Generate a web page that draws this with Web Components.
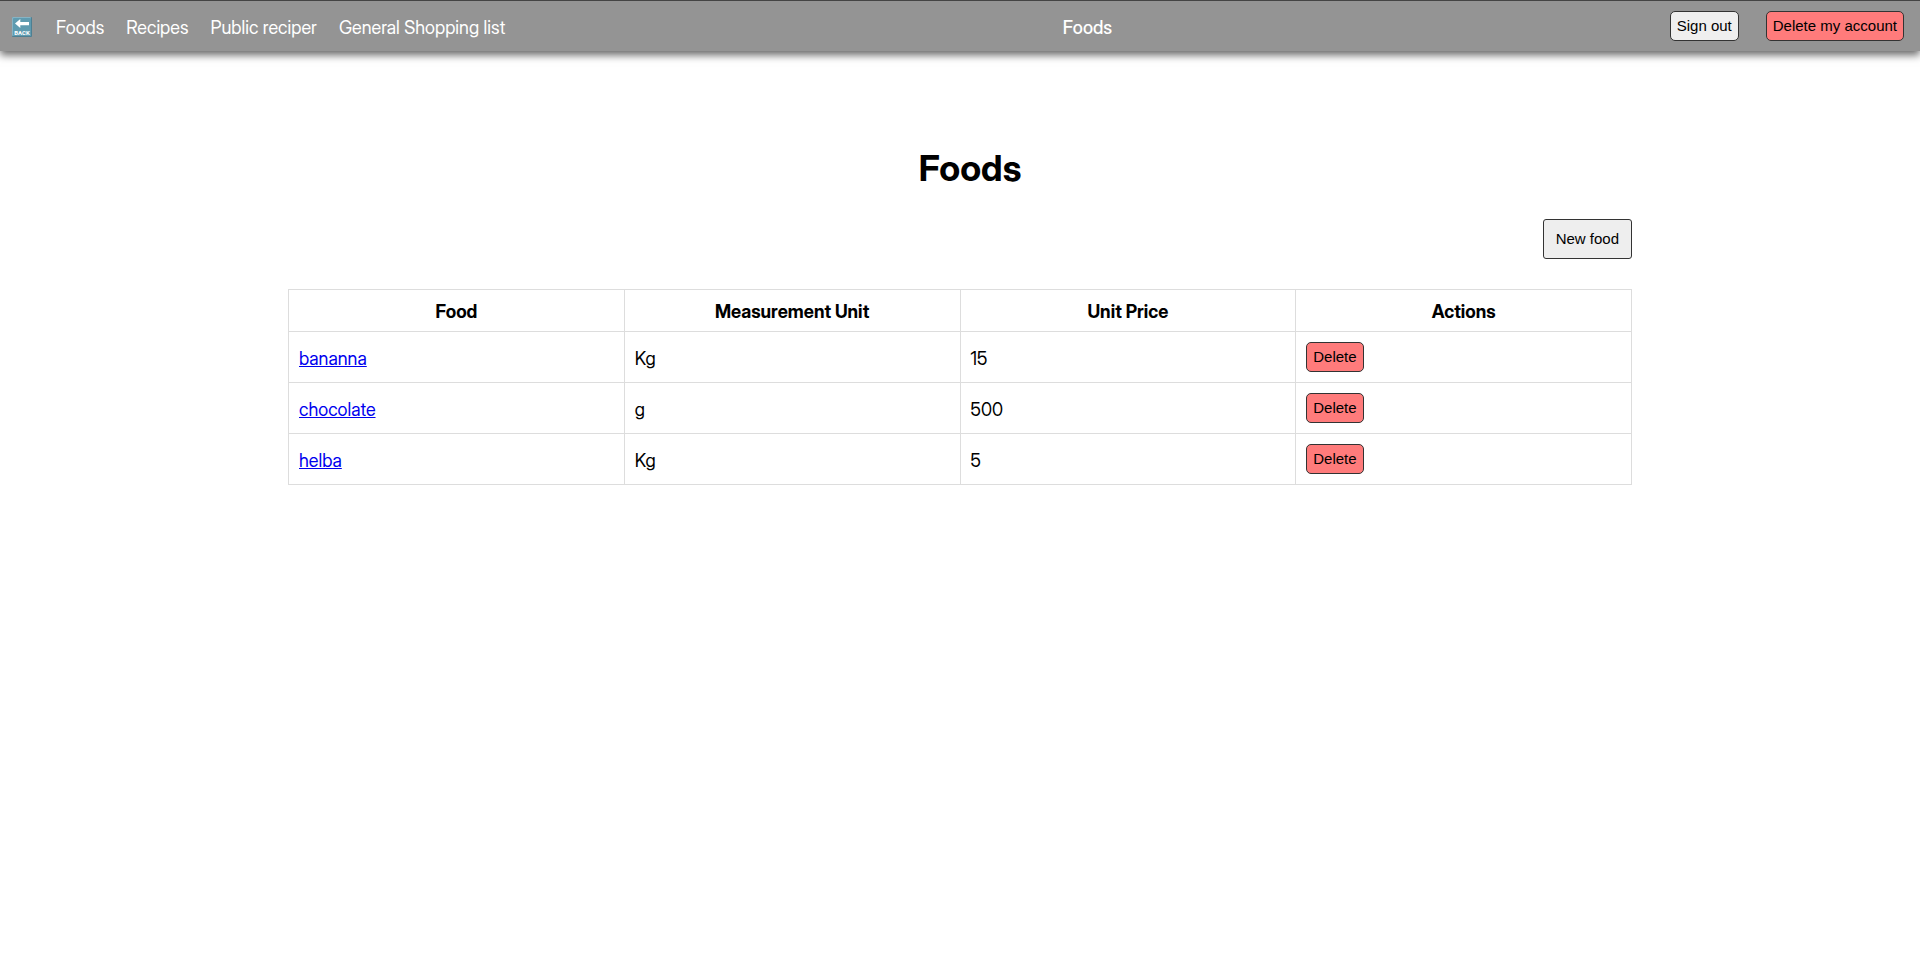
<!DOCTYPE html>
<html lang="en">
<head>
<meta charset="utf-8">
<title>Foods</title>
<style>
  body { margin: 0; background: #fff; color: #000; font: 18px/21px "Inter Display", Inter, sans-serif; }
</style>
</head>
<body>
<food-app></food-app>
<script>
const define = (name, markup) => {
  const template = document.createElement('template');
  template.innerHTML = markup;
  customElements.define(name, class extends HTMLElement {
    constructor() {
      super();
      this.attachShadow({ mode: 'open' }).append(template.content.cloneNode(true));
    }
  });
};

define('app-button', `
  <style>
    :host { display: inline-block; }
    button {
      display: block; margin: 0; padding: 5px 6px;
      font: 15px/18px "Liberation Sans", Arial, sans-serif; color: #000;
      background: #efefef; border: 1px solid #333; border-radius: 5px; cursor: pointer;
    }
    :host([danger]) button { background: #ff7b7b; }
    :host([large]) button { padding: 10px 12px; border-radius: 3px; background: #eee; }
  </style>
  <button type="button"><slot></slot></button>`);

define('nav-link', `
  <style>
    :host { display: block; }
    a { display: block; color: #fff; text-decoration: none; }
  </style>
  <a href="#"><slot></slot></a>`);

define('back-icon', `
  <style>:host, svg { display: block; } :host { width: 22px; }</style>
  <svg width="20" height="20" viewBox="0 0 20 20" role="img" aria-label="Back">
    <rect width="20" height="20" rx="1" fill="#4d7f92"/>
    <rect width="19" height="19" rx="1" fill="#86b3c4"/>
    <rect x="1" y="1" width="18" height="18" rx="1" fill="#5f9bb0"/>
    <path d="M3 6.500 8.300 2v3H17v3.200H8.300V11z" fill="#fff"/>
    <text x="10" y="18" text-anchor="middle" font-family="Roboto, sans-serif" font-size="6" font-weight="700" fill="#fff">BACK</text>
  </svg>`);

define('app-header', `
  <style>
    :host {
      display: flex; justify-content: space-between; align-items: center;
      box-sizing: border-box; padding: 10px 16px 10px 12px;
      color: #fff; background: #949494; border-top: 1px solid #444;
      box-shadow: 0 4px 8px rgba(0, 0, 0, .6);
    }
    nav { display: flex; align-items: center; gap: 22px; }
    nav, .title { padding-top: 2px; }
    .title { font-weight: 500; }
    .actions { display: flex; gap: 27px; }
  </style>
  <nav>
    <nav-link><back-icon></back-icon></nav-link>
    <nav-link>Foods</nav-link>
    <nav-link>Recipes</nav-link>
    <nav-link>Public reciper</nav-link>
    <nav-link>General Shopping list</nav-link>
  </nav>
  <div class="title">Foods</div>
  <div class="actions">
    <app-button>Sign out</app-button>
    <app-button danger>Delete my account</app-button>
  </div>`);

const foods = [['bananna', 'Kg', 15], ['chocolate', 'g', 500], ['helba', 'Kg', 5]];

define('food-table', `
  <style>
    :host { display: block; }
    table { width: 100%; table-layout: fixed; border-collapse: collapse; }
    th, td { padding: 10px; border: 1px solid #ddd; }
    th { padding: 11px 10px 9px; }
    td { text-align: left; vertical-align: middle; }
    td:not(:last-child) { padding: 12px 10px 10px; }
    a { color: #00e; }
    app-button { display: block; }
  </style>
  <table>
    <thead><tr><th>Food</th><th>Measurement Unit</th><th>Unit Price</th><th>Actions</th></tr></thead>
    <tbody>${foods.map(([name, unit, price]) => `
      <tr><td><a href="#">${name}</a></td><td>${unit}</td><td>${price}</td>
      <td><app-button danger>Delete</app-button></td></tr>`).join('')}
    </tbody>
  </table>`);

define('food-app', `
  <style>
    :host { display: block; }
    main { width: 70%; margin: 0 auto; padding-top: 97px; }
    h1 { margin: 0 0 30px; padding-left: 20px; font-size: 36px; line-height: 41px; text-align: center; }
    .toolbar { display: flex; justify-content: flex-end; margin-bottom: 30px; }
  </style>
  <app-header></app-header>
  <main>
    <h1>Foods</h1>
    <div class="toolbar"><app-button large>New food</app-button></div>
    <food-table></food-table>
  </main>`);
</script>
</body>
</html>
